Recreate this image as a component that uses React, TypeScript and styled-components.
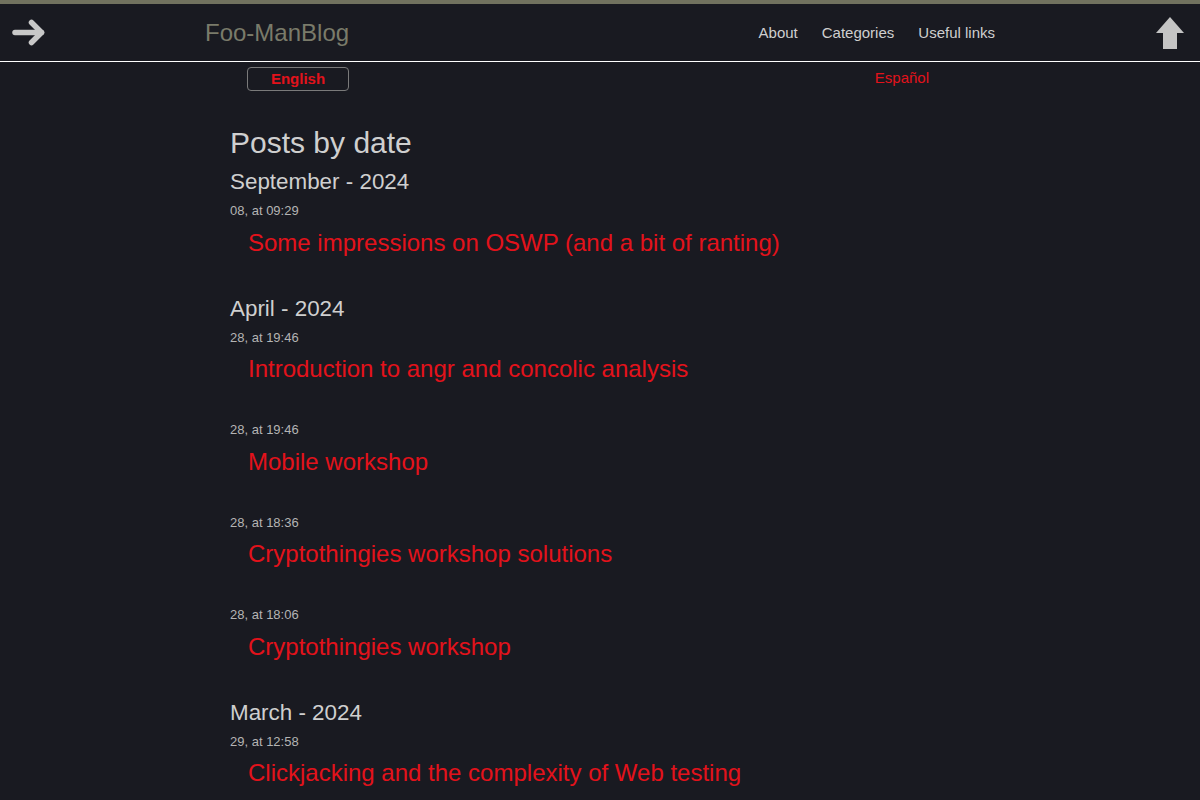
import React from "react";
import styled, { createGlobalStyle } from "styled-components";

const GlobalStyle = createGlobalStyle`
  body {
    margin: 0;
    background: #191a21;
    font-family: "Liberation Sans", Arial, sans-serif;
    color: #cfcfcf;
  }
`;

const Stripe = styled.div`
  height: 4px;
  background: #71725f;
`;

const Header = styled.header`
  display: grid;
  grid-template-columns: 1fr 790px 1fr;
  align-items: center;
  height: 57px;
  border-bottom: 1px solid #ffffff;
`;

const SideCell = styled.div<{ $right?: boolean }>`
  display: flex;
  align-items: center;
  justify-content: ${(p) => (p.$right ? "flex-end" : "flex-start")};
  padding: ${(p) => (p.$right ? "0 16px 0 0" : "0 0 0 12px")};
`;

const HeaderInner = styled.div`
  display: flex;
  align-items: center;
  justify-content: space-between;
`;

const Brand = styled.a`
  font-size: 24px;
  color: #7a7b6a;
  text-decoration: none;
`;

const Nav = styled.nav`
  display: flex;
  gap: 24px;
`;

const NavLink = styled.a`
  font-size: 15px;
  color: #cfcfcf;
  text-decoration: none;
`;

const Main = styled.main`
  width: 740px;
  margin: 0 auto;
`;

const LangRow = styled.div`
  display: flex;
  align-items: center;
  justify-content: space-between;
  margin-top: 5px;
  padding: 0 41px 0 17px;
`;

const LangButton = styled.a`
  box-sizing: border-box;
  width: 102px;
  height: 24px;
  padding-bottom: 2px;
  border: 1px solid #7a7a7a;
  border-radius: 4px;
  display: flex;
  align-items: center;
  justify-content: center;
  font-size: 15px;
  font-weight: bold;
  color: #e3121b;
  text-decoration: none;
`;

const LangLink = styled.a`
  font-size: 15px;
  color: #e3121b;
  text-decoration: none;
  margin-top: -3px;
`;

const PageTitle = styled.h1`
  font-size: 30px;
  line-height: 34px;
  font-weight: normal;
  color: #cfcfcf;
  margin: 35px 0 9px;
`;

const MonthTitle = styled.h2<{ $first?: boolean }>`
  font-size: 22.4px;
  line-height: 26px;
  font-weight: normal;
  color: #cfcfcf;
  margin: ${(p) => (p.$first ? "0" : "1px")} 0 8px;
`;

const Post = styled.div`
  display: flex;
  flex-direction: column;
  margin-bottom: 39px;
`;

const PostDate = styled.span`
  font-size: 13px;
  line-height: 16px;
  color: #b4b4b4;
`;

const PostTitle = styled.a`
  font-size: 24px;
  line-height: 28px;
  color: #e3121b;
  text-decoration: none;
  margin: 9.5px 0 0 18px;
`;

const months = [
  {
    name: "September - 2024",
    posts: [{ date: "08, at 09:29", title: "Some impressions on OSWP (and a bit of ranting)" }],
  },
  {
    name: "April - 2024",
    posts: [
      { date: "28, at 19:46", title: "Introduction to angr and concolic analysis" },
      { date: "28, at 19:46", title: "Mobile workshop" },
      { date: "28, at 18:36", title: "Cryptothingies workshop solutions" },
      { date: "28, at 18:06", title: "Cryptothingies workshop" },
    ],
  },
  {
    name: "March - 2024",
    posts: [{ date: "29, at 12:58", title: "Clickjacking and the complexity of Web testing" }],
  },
];

const ArrowRight = () => (
  <svg width="33" height="27" viewBox="0 0 33 27">
    <g fill="none" stroke="#c8c8c8" strokeWidth="5.5" strokeLinecap="round" strokeLinejoin="round">
      <line x1="3" y1="13.5" x2="29.5" y2="13.5" />
      <polyline points="19.5,3.5 29.5,13.5 19.5,23.5" />
    </g>
  </svg>
);

const ArrowUp = () => (
  <svg width="28" height="32" viewBox="0 0 28 32">
    <polygon points="14,0 28,16 21,16 21,32 7,32 7,16 0,16" fill="#c4c4c4" />
  </svg>
);

const App = () => {
  return (
    <>
      <GlobalStyle />
      <Stripe />
      <Header>
        <SideCell>
          <ArrowRight />
        </SideCell>
        <HeaderInner>
          <Brand href="#">Foo-ManBlog</Brand>
          <Nav>
            <NavLink href="#">About</NavLink>
            <NavLink href="#">Categories</NavLink>
            <NavLink href="#">Useful links</NavLink>
          </Nav>
        </HeaderInner>
        <SideCell $right>
          <ArrowUp />
        </SideCell>
      </Header>
      <Main>
        <LangRow>
          <LangButton href="#">English</LangButton>
          <LangLink href="#">Español</LangLink>
        </LangRow>
        <PageTitle>Posts by date</PageTitle>
        {months.map((m, i) => (
          <section key={m.name}>
            <MonthTitle $first={i === 0}>{m.name}</MonthTitle>
            {m.posts.map((p) => (
              <Post key={p.title}>
                <PostDate>{p.date}</PostDate>
                <PostTitle href="#">{p.title}</PostTitle>
              </Post>
            ))}
          </section>
        ))}
      </Main>
    </>
  );
};

export default App;
